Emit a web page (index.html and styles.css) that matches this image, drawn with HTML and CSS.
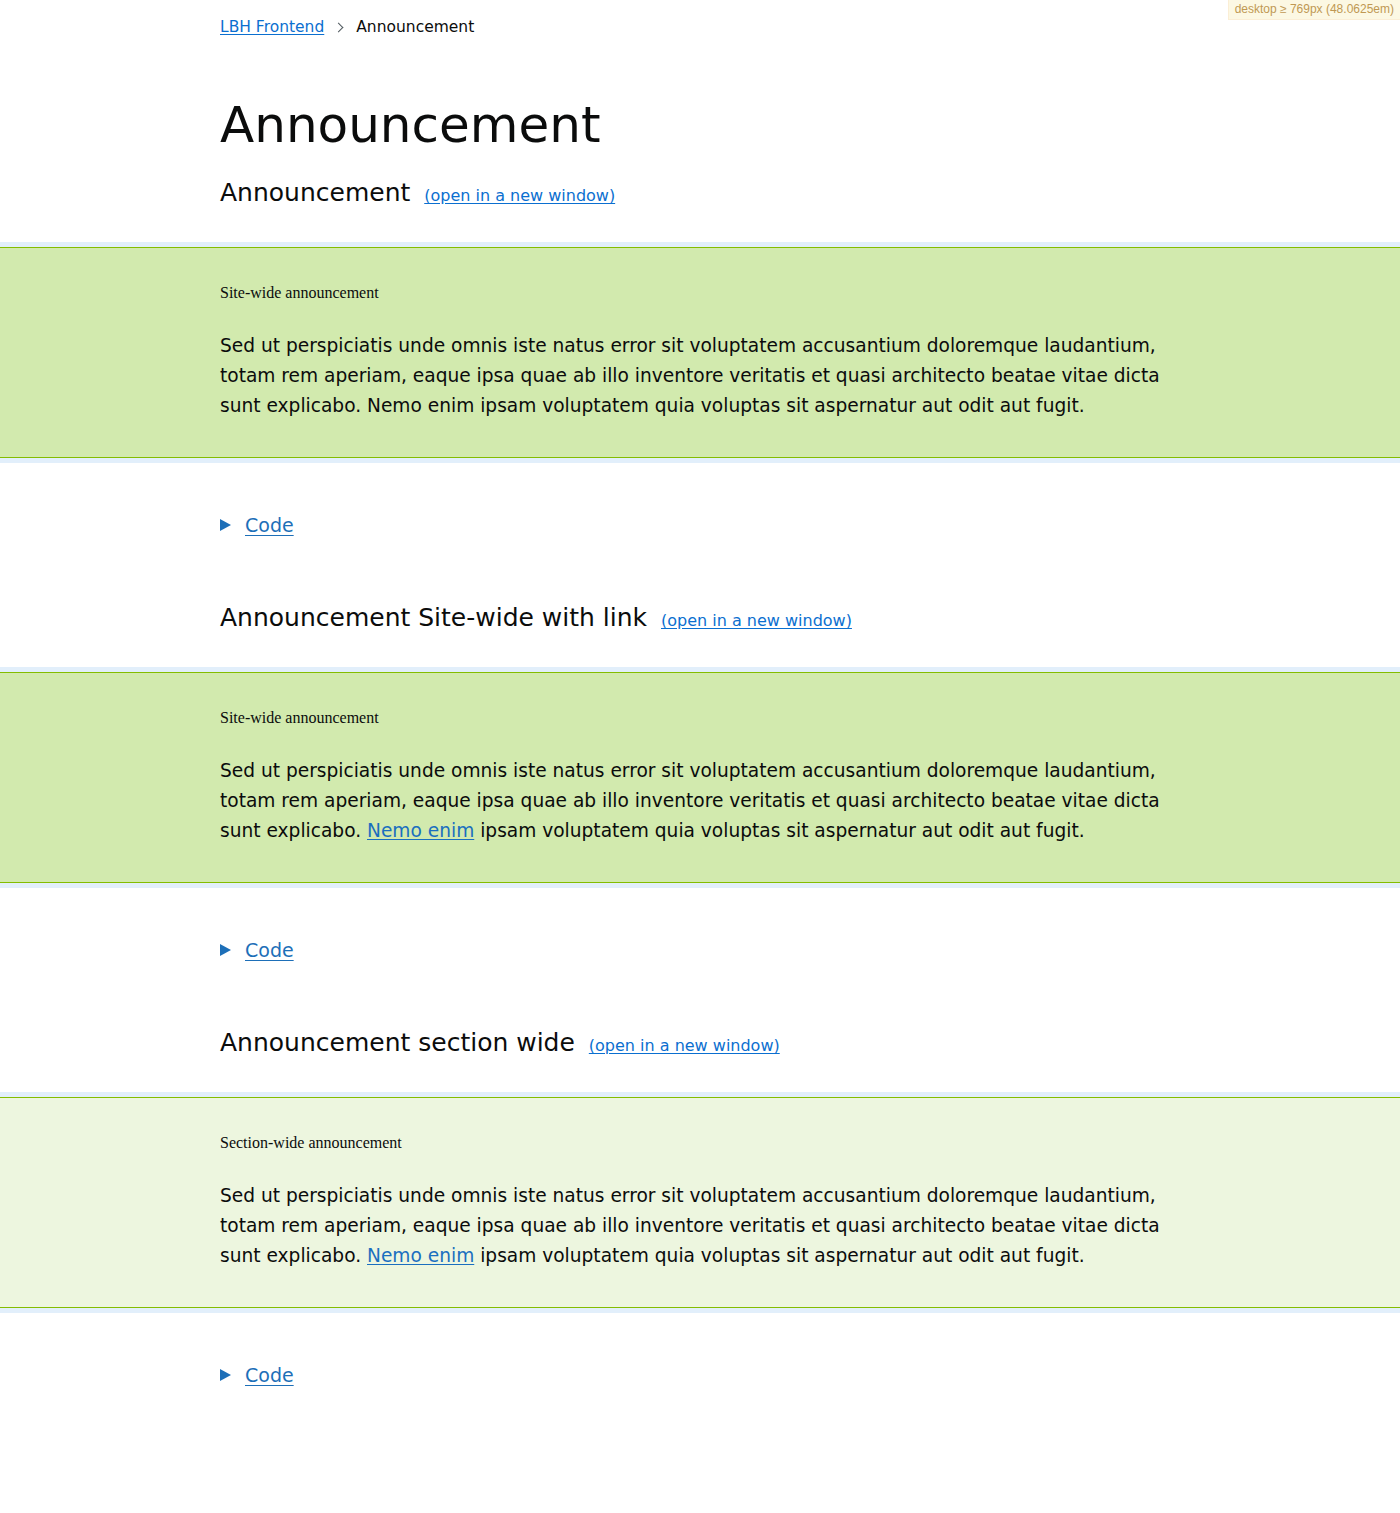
FILE: index.html
```html
<!DOCTYPE html>
<html lang="en">
<head>
<meta charset="utf-8">
<title>Announcement</title>
<link rel="stylesheet" href="styles.css">
</head>
<body>
<div class="mq-badge">desktop ≥ 769px (48.0625em)</div>
<div class="container">
  <nav class="breadcrumbs">
    <a class="crumb-link" href="#">LBH Frontend</a>
    <span class="chevron"></span>
    <span class="crumb-current">Announcement</span>
  </nav>
  <h1 class="page-title">Announcement</h1>
</div>

<section class="example">
  <div class="container">
    <h2 class="example-title">Announcement <a class="new-window" href="#">(open in a new window)</a></h2>
  </div>
  <div class="frame">
    <div class="announcement site-wide">
      <div class="container">
        <h3 class="announcement-title">Site-wide announcement</h3>
        <p class="announcement-text">Sed ut perspiciatis unde omnis iste natus error sit voluptatem accusantium doloremque laudantium, totam rem aperiam, eaque ipsa quae ab illo inventore veritatis et quasi architecto beatae vitae dicta sunt explicabo. Nemo enim ipsam voluptatem quia voluptas sit aspernatur aut odit aut fugit.</p>
      </div>
    </div>
  </div>
  <div class="container">
    <details class="code">
      <summary class="code-summary"><span class="code-link">Code</span></summary>
    </details>
  </div>
</section>

<section class="example">
  <div class="container">
    <h2 class="example-title">Announcement Site-wide with link <a class="new-window" href="#">(open in a new window)</a></h2>
  </div>
  <div class="frame">
    <div class="announcement site-wide">
      <div class="container">
        <h3 class="announcement-title">Site-wide announcement</h3>
        <p class="announcement-text">Sed ut perspiciatis unde omnis iste natus error sit voluptatem accusantium doloremque laudantium, totam rem aperiam, eaque ipsa quae ab illo inventore veritatis et quasi architecto beatae vitae dicta sunt explicabo. <a class="text-link" href="#">Nemo enim</a> ipsam voluptatem quia voluptas sit aspernatur aut odit aut fugit.</p>
      </div>
    </div>
  </div>
  <div class="container">
    <details class="code">
      <summary class="code-summary"><span class="code-link">Code</span></summary>
    </details>
  </div>
</section>

<section class="example">
  <div class="container">
    <h2 class="example-title">Announcement section wide <a class="new-window" href="#">(open in a new window)</a></h2>
  </div>
  <div class="frame">
    <div class="announcement section-wide">
      <div class="container">
        <h3 class="announcement-title">Section-wide announcement</h3>
        <p class="announcement-text">Sed ut perspiciatis unde omnis iste natus error sit voluptatem accusantium doloremque laudantium, totam rem aperiam, eaque ipsa quae ab illo inventore veritatis et quasi architecto beatae vitae dicta sunt explicabo. <a class="text-link" href="#">Nemo enim</a> ipsam voluptatem quia voluptas sit aspernatur aut odit aut fugit.</p>
      </div>
    </div>
  </div>
  <div class="container">
    <details class="code">
      <summary class="code-summary"><span class="code-link">Code</span></summary>
    </details>
  </div>
</section>
</body>
</html>
```

FILE: styles.css
```css
html, body {
  margin: 0;
  padding: 0;
  background: #ffffff;
}

body {
  font-family: "DejaVu Sans", "Noto Sans", sans-serif;
  color: #0b0c0c;
  min-height: 1513px;
}

.container {
  max-width: 960px;
  margin: 0 auto;
}

/* breakpoint badge */
.mq-badge {
  position: fixed;
  top: 0;
  right: 0;
  z-index: 100;
  background: #fcf8e3;
  color: #c09853;
  border-left: 1px solid #fbeed5;
  border-bottom: 1px solid #fbeed5;
  padding: 3px 6px;
  font-family: "Liberation Sans", Arial, sans-serif;
  font-size: 12px;
  line-height: 13px;
}

/* breadcrumbs */
.breadcrumbs {
  display: flex;
  align-items: center;
  padding-top: 17px;
  font-size: 15.5px;
  line-height: 20px;
}

.crumb-link {
  color: #0b6fd0;
  text-decoration: underline;
  text-underline-offset: 2px;
}

.chevron {
  width: 6px;
  height: 6px;
  border-top: 1px solid #505a5f;
  border-right: 1px solid #505a5f;
  transform: rotate(45deg);
  margin: 0 14px 0 11px;
}

.crumb-current {
  color: #0b0c0c;
}

.page-title {
  margin: 58px 0 0;
  font-size: 50px;
  line-height: 60px;
  font-weight: normal;
}

/* examples */
.example-title {
  margin: 23px 0 0;
  font-size: 25px;
  line-height: 30px;
  font-weight: normal;
}

.example + .example .example-title {
  margin-top: 63px;
}

.new-window {
  margin-left: 6px;
  font-size: 16px;
  line-height: 1;
  color: #0b6fd0;
  text-decoration: underline;
  text-underline-offset: 2px;
}

.frame {
  margin-top: 34px;
  background: #e2effb;
  padding: 5px 0;
}

.announcement {
  border-top: 1px solid #84bd00;
  border-bottom: 1px solid #84bd00;
  padding: 36px 0 36px;
}

.site-wide {
  background: #d2eaae;
}

.section-wide {
  background: #edf6df;
}

.announcement-title {
  margin: 0;
  font-family: "Liberation Serif", "Times New Roman", serif;
  font-size: 16px;
  line-height: 18px;
  font-weight: normal;
}

.announcement-text {
  margin: 29px 0 0;
  font-size: 18.6px;
  line-height: 30px;
}

.text-link {
  color: #1a6fbf;
  text-decoration: underline;
  text-underline-offset: 2px;
}

/* code details */
.code {
  margin-top: 47px;
}

.code-summary {
  display: flex;
  align-items: center;
  list-style: none;
  font-size: 19px;
  line-height: 30px;
  cursor: pointer;
}

.code-summary::-webkit-details-marker {
  display: none;
}

.code-summary::before {
  content: "";
  width: 0;
  height: 0;
  border-top: 6.5px solid transparent;
  border-bottom: 6.5px solid transparent;
  border-left: 11px solid #1d6fb8;
  margin-right: 14px;
}

.code-link {
  color: #1d6fb8;
  text-decoration: underline;
  text-underline-offset: 3px;
}
```
